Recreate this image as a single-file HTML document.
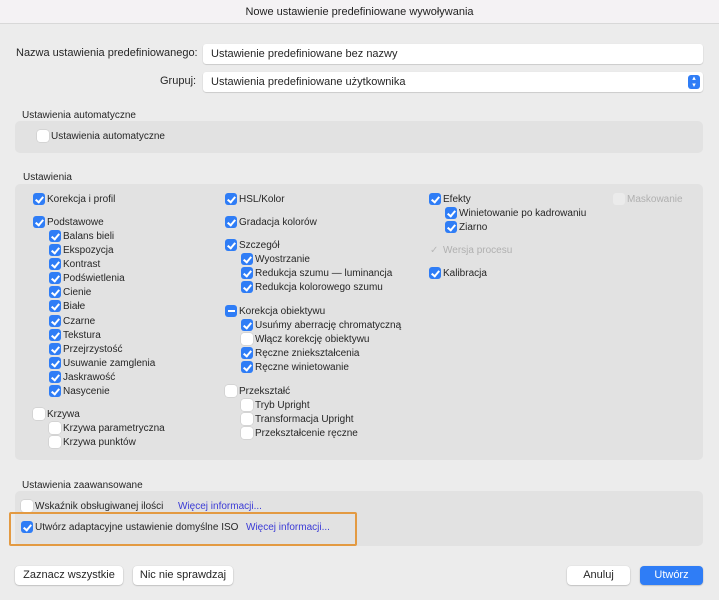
<!DOCTYPE html>
<html><head><meta charset="utf-8"><style>
*{box-sizing:border-box;margin:0;padding:0}
body{width:719px;height:600px;background:#ececec;font-family:"Liberation Sans",sans-serif;font-size:10px;color:#262626;position:relative;overflow:hidden}
.t{position:absolute;white-space:nowrap}
.title{position:absolute;left:0;top:0;width:719px;height:24px;background:#f4f2f4;border-bottom:1px solid #d8d8d8;text-align:center;line-height:24px;font-size:11px;color:#222}
.panel{position:absolute;background:#e2e2e2;border-radius:5px}
.in{position:absolute;background:#fff;border-radius:3px;box-shadow:0 0.5px 1px rgba(0,0,0,.25);font-size:11px;line-height:20px;padding-left:8px}
.r{position:absolute;height:14px;line-height:14px;white-space:nowrap}
.cb{position:absolute;left:0;top:1px;width:12px;height:12px;border-radius:3px;background:#fff;box-shadow:0 0 0 .5px rgba(0,0,0,.12)}
.cb.c{background:#2f7df6;box-shadow:none}
.cb.c::after{content:"";position:absolute;left:4px;top:1.5px;width:3px;height:6px;border:solid #fff;border-width:0 2px 2px 0;transform:rotate(40deg)}
.cb.m{background:#2f7df6;box-shadow:none}
.cb.m::after{content:"";position:absolute;left:2.5px;top:5px;width:7px;height:2px;background:#fff}
.r span{position:absolute;left:14px;top:1px}
.dis{color:#b0b0b0}
.btn{position:absolute;height:19px;background:#fff;border-radius:4px;box-shadow:0 .5px 1.5px rgba(0,0,0,.3);text-align:center;line-height:19px;font-size:11px}
a{color:#3b3bd6;text-decoration:none}
</style></head><body>
<div class="title">Nowe ustawienie predefiniowane wywoływania</div>
<div class="t" style="left:16px;top:47px;font-size:11px">Nazwa ustawienia predefiniowanego:</div>
<div class="in" style="left:203px;top:44px;width:500px;height:20px">Ustawienie predefiniowane bez nazwy</div>
<div class="t" style="left:160px;top:75px;font-size:11px">Grupuj:</div>
<div class="in" style="left:203px;top:72px;width:500px;height:20px">Ustawienia predefiniowane użytkownika
<div style="position:absolute;right:3px;top:3px;width:12px;height:14px;background:#2f7df6;border-radius:3px;color:#fff;font-size:7px;line-height:7px;text-align:center">▴<br>▾</div></div>

<div class="t" style="left:22px;top:110px">Ustawienia automatyczne</div>
<div class="panel" style="left:15px;top:121px;width:688px;height:32px"></div>
<div class="r" style="left:37px;top:129px"><div class="cb"></div><span>Ustawienia automatyczne</span></div>

<div class="t" style="left:23px;top:172px">Ustawienia</div>
<div class="panel" style="left:15px;top:184px;width:688px;height:276px"></div>

<div class="r" style="left:33px;top:192px"><div class="cb c"></div><span>Korekcja i profil</span></div>
<div class="r" style="left:33px;top:215px"><div class="cb c"></div><span>Podstawowe</span></div>
<div class="r" style="left:49px;top:229px"><div class="cb c"></div><span>Balans bieli</span></div>
<div class="r" style="left:49px;top:243px"><div class="cb c"></div><span>Ekspozycja</span></div>
<div class="r" style="left:49px;top:257px"><div class="cb c"></div><span>Kontrast</span></div>
<div class="r" style="left:49px;top:271px"><div class="cb c"></div><span>Podświetlenia</span></div>
<div class="r" style="left:49px;top:285px"><div class="cb c"></div><span>Cienie</span></div>
<div class="r" style="left:49px;top:299px"><div class="cb c"></div><span>Białe</span></div>
<div class="r" style="left:49px;top:314px"><div class="cb c"></div><span>Czarne</span></div>
<div class="r" style="left:49px;top:328px"><div class="cb c"></div><span>Tekstura</span></div>
<div class="r" style="left:49px;top:342px"><div class="cb c"></div><span>Przejrzystość</span></div>
<div class="r" style="left:49px;top:356px"><div class="cb c"></div><span>Usuwanie zamglenia</span></div>
<div class="r" style="left:49px;top:370px"><div class="cb c"></div><span>Jaskrawość</span></div>
<div class="r" style="left:49px;top:384px"><div class="cb c"></div><span>Nasycenie</span></div>
<div class="r" style="left:33px;top:407px"><div class="cb"></div><span>Krzywa</span></div>
<div class="r" style="left:49px;top:421px"><div class="cb"></div><span>Krzywa parametryczna</span></div>
<div class="r" style="left:49px;top:435px"><div class="cb"></div><span>Krzywa punktów</span></div>

<div class="r" style="left:225px;top:192px"><div class="cb c"></div><span>HSL/Kolor</span></div>
<div class="r" style="left:225px;top:215px"><div class="cb c"></div><span>Gradacja kolorów</span></div>
<div class="r" style="left:225px;top:238px"><div class="cb c"></div><span>Szczegół</span></div>
<div class="r" style="left:241px;top:252px"><div class="cb c"></div><span>Wyostrzanie</span></div>
<div class="r" style="left:241px;top:266px"><div class="cb c"></div><span>Redukcja szumu — luminancja</span></div>
<div class="r" style="left:241px;top:280px"><div class="cb c"></div><span>Redukcja kolorowego szumu</span></div>
<div class="r" style="left:225px;top:304px"><div class="cb m"></div><span>Korekcja obiektywu</span></div>
<div class="r" style="left:241px;top:318px"><div class="cb c"></div><span>Usuńmy aberrację chromatyczną</span></div>
<div class="r" style="left:241px;top:332px"><div class="cb"></div><span>Włącz korekcję obiektywu</span></div>
<div class="r" style="left:241px;top:346px"><div class="cb c"></div><span>Ręczne zniekształcenia</span></div>
<div class="r" style="left:241px;top:360px"><div class="cb c"></div><span>Ręczne winietowanie</span></div>
<div class="r" style="left:225px;top:384px"><div class="cb"></div><span>Przekształć</span></div>
<div class="r" style="left:241px;top:398px"><div class="cb"></div><span>Tryb Upright</span></div>
<div class="r" style="left:241px;top:412px"><div class="cb"></div><span>Transformacja Upright</span></div>
<div class="r" style="left:241px;top:426px"><div class="cb"></div><span>Przekształcenie ręczne</span></div>

<div class="r" style="left:429px;top:192px"><div class="cb c"></div><span>Efekty</span></div>
<div class="r" style="left:445px;top:206px"><div class="cb c"></div><span>Winietowanie po kadrowaniu</span></div>
<div class="r" style="left:445px;top:220px"><div class="cb c"></div><span>Ziarno</span></div>
<div class="r dis" style="left:429px;top:243px"><span style="left:1px;color:#b8b8b8">✓</span><span>Wersja procesu</span></div>
<div class="r" style="left:429px;top:266px"><div class="cb c"></div><span>Kalibracja</span></div>
<div class="r dis" style="left:613px;top:192px"><div class="cb" style="background:#ebebeb;box-shadow:none"></div><span>Maskowanie</span></div>

<div class="t" style="left:22px;top:480px">Ustawienia zaawansowane</div>
<div class="panel" style="left:15px;top:491px;width:688px;height:55px"></div>
<div class="r" style="left:21px;top:499px"><div class="cb"></div><span>Wskaźnik obsługiwanej ilości</span></div>
<a class="t" style="left:178px;top:501px">Więcej informacji...</a>
<div class="r" style="left:21px;top:520px"><div class="cb c"></div><span>Utwórz adaptacyjne ustawienie domyślne ISO</span></div>
<a class="t" style="left:246px;top:522px">Więcej informacji...</a>
<div style="position:absolute;left:9px;top:512px;width:348px;height:34px;border:2px solid #e39a42;border-radius:2px"></div>

<div class="btn" style="left:15px;top:566px;width:108px">Zaznacz wszystkie</div>
<div class="btn" style="left:133px;top:566px;width:100px">Nic nie sprawdzaj</div>
<div class="btn" style="left:567px;top:566px;width:63px">Anuluj</div>
<div class="btn" style="left:640px;top:566px;width:63px;background:#2f7df6;color:#fff">Utwórz</div>
</body></html>
